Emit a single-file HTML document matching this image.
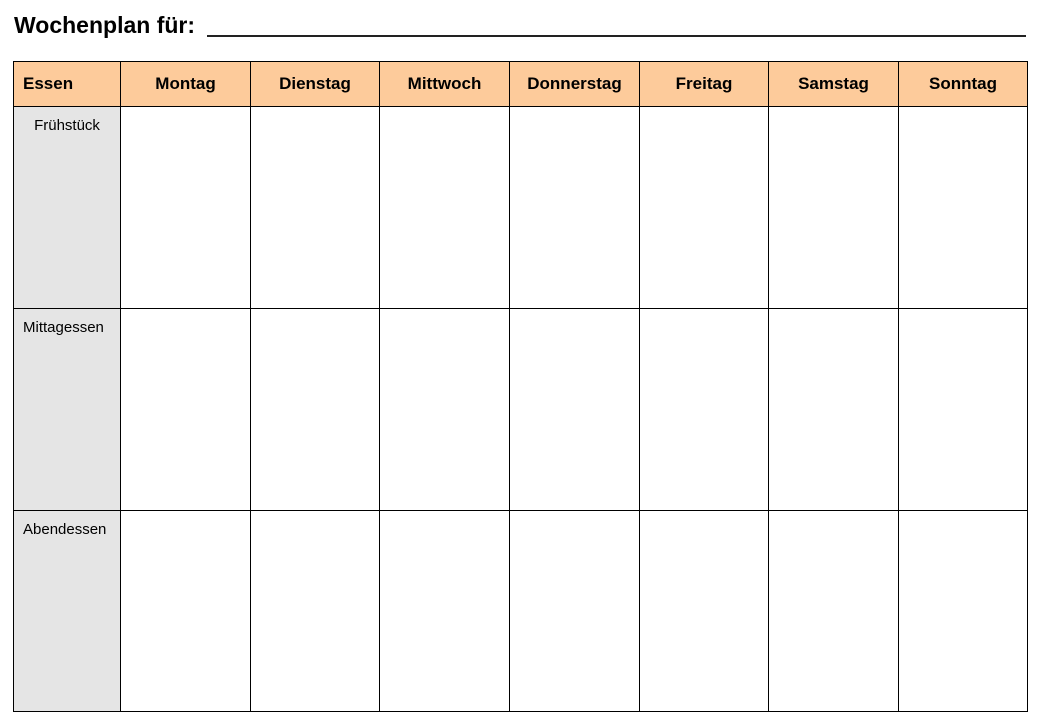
<!DOCTYPE html>
<html><head><meta charset="utf-8"><style>
body{margin:0;width:1047px;height:728px;background:#fff;position:relative;overflow:hidden;font-family:"Liberation Sans",sans-serif;color:#000}
.a{position:absolute}
.v{position:absolute;width:1px;background:#000;top:61px;height:651px}
.h{position:absolute;height:1px;background:#000;left:13px;width:1015px}
.hd{position:absolute;top:62px;height:44px;line-height:44px;font-weight:bold;font-size:17px;text-align:center}
.rl{position:absolute;left:14px;width:106px;font-size:15px;text-align:center}
</style></head><body>
<div class="a" style="left:14px;top:12px;font-size:23px;font-weight:bold;">Wochenplan für:</div>
<div class="a" style="left:207px;top:35px;width:819px;height:2px;background:#222"></div>
<div class="a" style="left:13px;top:61px;width:1015px;height:45px;background:#fdcb9b"></div>
<div class="a" style="left:14px;top:107px;width:106px;height:604px;background:#e5e5e5"></div>
<div class="h" style="top:61px"></div>
<div class="h" style="top:106px"></div>
<div class="h" style="top:308px"></div>
<div class="h" style="top:510px"></div>
<div class="h" style="top:711px"></div>
<div class="v" style="left:13px"></div>
<div class="v" style="left:120px"></div>
<div class="v" style="left:250px"></div>
<div class="v" style="left:379px"></div>
<div class="v" style="left:509px"></div>
<div class="v" style="left:639px"></div>
<div class="v" style="left:768px"></div>
<div class="v" style="left:898px"></div>
<div class="v" style="left:1027px"></div>
<div class="hd" style="left:23px;text-align:left">Essen</div>
<div class="hd" style="left:121px;width:129px">Montag</div>
<div class="hd" style="left:251px;width:128px">Dienstag</div>
<div class="hd" style="left:380px;width:129px">Mittwoch</div>
<div class="hd" style="left:510px;width:129px">Donnerstag</div>
<div class="hd" style="left:640px;width:128px">Freitag</div>
<div class="hd" style="left:769px;width:129px">Samstag</div>
<div class="hd" style="left:899px;width:128px">Sonntag</div>
<div class="rl" style="top:117px">Frühstück</div>
<div class="rl" style="top:319px;left:23px;text-align:left">Mittagessen</div>
<div class="rl" style="top:521px;left:23px;text-align:left">Abendessen</div>
</body></html>
